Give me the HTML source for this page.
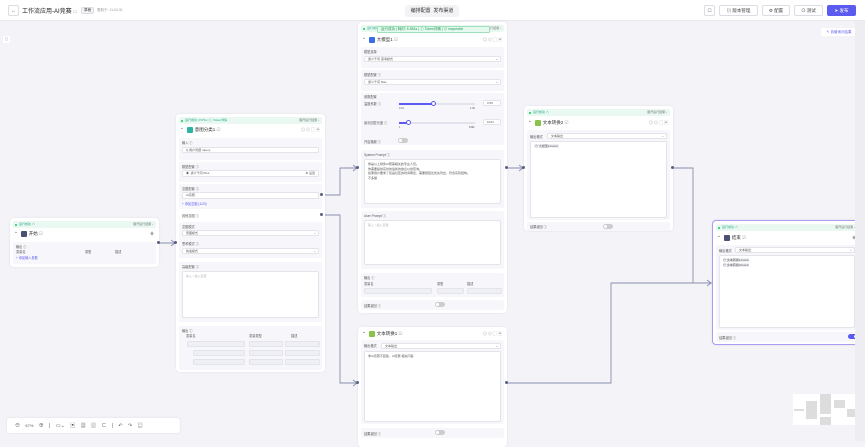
<!DOCTYPE html>
<html><head><meta charset="utf-8"><style>
*{box-sizing:border-box;margin:0;padding:0}
body{width:865px;height:441px;overflow:hidden;background:#f3f3f8;font-family:"Liberation Sans","Noto Sans CJK SC",sans-serif;color:#333;position:relative}
.a{position:absolute}
.hdr{left:0;top:0;width:865px;height:21px;background:#fff;border-bottom:1px solid #e8e8ee}
.btn{position:absolute;top:5px;height:11px;border:1px solid #dcdce4;border-radius:2px;background:#fff;font-size:4.5px;line-height:9px;text-align:center;color:#444}
.node{position:absolute;background:#fff;border-radius:4px;box-shadow:0 0 2px rgba(0,0,0,.08)}
.st{position:absolute;left:3px;right:3px;height:7px;background:#e9f8f1;border-radius:2px;font-size:3px;line-height:7px;color:#2a8;padding-left:6px}
.st:before{content:"";position:absolute;left:2px;top:2.5px;width:2px;height:2px;border-radius:1px;background:#1c5}
.st span{position:absolute;right:3px;color:#777}
.tt{position:absolute;left:4px;font-size:4.5px;line-height:7px;color:#333}
.ic{display:inline-block;width:6px;height:6px;border-radius:1px;vertical-align:middle;margin:0 2px 0 3px}
.ops{position:absolute;right:4px;font-size:4px;color:#999;letter-spacing:1px}
.sec{position:absolute;left:3px;right:3px;background:#f7f7fb;border-radius:2px}
.lb{position:absolute;left:3px;font-size:3.2px;color:#555}
.in{position:absolute;left:3px;right:3px;height:6px;background:#fff;border:1px solid #e3e3ea;border-radius:1.5px;font-size:3px;line-height:4px;padding-left:3px;color:#555}
.ta{position:absolute;left:3px;right:3px;background:#fff;border:1px solid #e3e3ea;border-radius:2px;font-size:3px;line-height:4.5px;padding:2px 3px;color:#555}
.ph{color:#bbb}
.tg{position:absolute;width:10px;height:5px;border-radius:3px;background:#ccc}
.tg:after{content:"";position:absolute;left:1px;top:1px;width:3px;height:3px;border-radius:2px;background:#fff}
.tg.on{background:#5b5bf0}.tg.on:after{left:6px}
.dot{position:absolute;width:3px;height:3px;border-radius:2px;background:#5a5f80}
.gi{position:absolute;height:6px;background:#eef0f5;border:1px solid #e3e3ea;border-radius:1.5px}
</style></head><body>
<div class="a hdr">
<div class="btn" style="left:8px;width:11px;top:5px">←</div>
<div class="a" style="left:22px;top:6px;font-size:6px;color:#222">工作流应用-AI竞赛 <span style="font-size:4px;color:#999">☐</span></div>
<div class="btn" style="left:81px;width:13px;top:7px;height:7px;font-size:3.5px;line-height:5px;background:#f3f3f6">草稿</div>
<div class="a" style="left:97px;top:8px;font-size:3.5px;color:#999">更新于: 11:04:31</div>
<div class="a" style="left:405px;top:5px;width:54px;height:12px;background:#f3f3f6;border-radius:3px;font-size:5px;line-height:12px;color:#333;text-align:center">编排配置 &nbsp;发布渠道</div>
<div class="btn" style="left:704px;width:11px">☐</div>
<div class="btn" style="left:719px;width:39px">▤ 版本管理</div>
<div class="btn" style="left:762px;width:28px">⚙ 配置</div>
<div class="btn" style="left:794px;width:29px">⊙ 测试</div>
<div class="btn" style="left:827px;width:29px;background:#5b5bf0;border-color:#5b5bf0;color:#fff">➤ 发布</div>
</div>
<div class="a" style="left:3px;top:36px;width:7px;height:7px;background:#fff;border-radius:1px;font-size:4px;text-align:center;color:#888">▯</div>
<div class="a" style="left:821px;top:28px;width:36px;height:8px;background:#fff;border-radius:2px;font-size:3.5px;line-height:8px;text-align:center;color:#5b5bf0">✎ 协管询问结果</div>

<svg class="a" style="left:0;top:0" width="865" height="441">
<g fill="none" stroke="#8a8fb0" stroke-width="0.9">
<path d="M159 243H176"/>
<path d="M322 195H340V168H358"/>
<path d="M322 215H340V383H358"/>
<path d="M507 168H524"/>
<path d="M673 168H693V283H712"/>
<path d="M507 383H611V283H712"/>
<path d="M171 240l4 3-4 3M353 165l4 3-4 3M353 380l4 3-4 3M519 165l4 3-4 3M707 280l4 3-4 3"/>
</g></svg>

<!-- start -->
<div class="node" style="left:10px;top:218px;width:149px;height:49px">
<div class="st" style="top:3px">运行成功 ∧<span>展开运行结果 ›</span></div>
<div class="tt" style="top:12px">⌃<span class="ic" style="background:#4a5070"></span>开始 <span style="color:#aaa">☑</span></div>
<div class="ops" style="top:13px">◉</div>
<div class="sec" style="top:24px;height:22px">
<div class="lb" style="top:2px">输出 ⓘ</div>
<div class="lb" style="top:7px">变量名</div><div class="lb" style="top:7px;left:72px">类型</div><div class="lb" style="top:7px;left:102px">描述</div>
<div class="lb" style="top:13px;color:#5b5bf0">+ 添加输入参数</div></div>
</div>
<div class="dot" style="left:157px;top:241px"></div>

<!-- classifier -->
<div class="node" style="left:176px;top:114px;width:149px;height:258px">
<div class="st" style="top:3px">运行成功 0.576s | ⓘ Token详情<span>展开运行结果 ›</span></div>
<div class="tt" style="top:12px">⌃<span class="ic" style="background:#2bb5a0"></span>意图分类1 <span style="color:#aaa">☑</span></div>
<div class="ops" style="top:13px">◎⊙▢▣</div>
<div class="sec" style="top:24px;height:22px"><div class="lb" style="top:2px">输入 ⓘ</div><div class="in" style="top:9px">Q 用户问题 /query</div></div>
<div class="sec" style="top:48px;height:20px"><div class="lb" style="top:2px">模型配置 ⓘ</div><div class="in" style="top:8px;height:7px">◉ &nbsp;通义千问 Plus<span style="float:right;margin-right:3px">⚙ 设置</span></div></div>
<div class="sec" style="top:70px;height:25px"><div class="lb" style="top:2px">意图配置 ⓘ</div><div class="in" style="top:8px;height:7px">AI竞赛</div><div class="lb" style="top:17px;color:#5b5bf0">+ 添加意图 (1/20)</div></div>
<div class="lb" style="top:99px;left:6px">其他意图 ⓘ</div>
<div class="sec" style="top:108px;height:36px"><div class="lb" style="top:2px">意图模式</div><div class="in" style="top:8px">意图模式 <span style="float:right;margin-right:2px">⌄</span></div><div class="lb" style="top:19px">思考模式 ⓘ</div><div class="in" style="top:26px">快速模式<span style="float:right;margin-right:2px">⌄</span></div></div>
<div class="sec" style="top:148px;height:60px"><div class="lb" style="top:2px">高级配置 ⓘ</div><div class="ta ph" style="top:9px;height:47px">输入 / 插入变量</div></div>
<div class="sec" style="top:212px;height:44px"><div class="lb" style="top:2px">输出 ⓘ</div>
<div class="lb" style="top:7px;left:7px">变量名</div><div class="lb" style="top:7px;left:70px">变量类型</div><div class="lb" style="top:7px;left:112px">描述</div>
<div class="gi" style="top:15px;left:8px;width:58px"></div><div class="gi" style="top:15px;left:70px;width:34px"></div><div class="gi" style="top:15px;left:106px;width:35px"></div>
<div class="gi" style="top:24px;left:14px;width:52px"></div><div class="gi" style="top:24px;left:70px;width:34px"></div><div class="gi" style="top:24px;left:106px;width:35px"></div>
<div class="gi" style="top:33px;left:14px;width:52px"></div><div class="gi" style="top:33px;left:70px;width:34px"></div><div class="gi" style="top:33px;left:106px;width:35px"></div></div>
</div>
<div class="dot" style="left:320px;top:193px"></div><div class="dot" style="left:320px;top:213px"></div>
<div class="dot" style="left:174px;top:241px"></div>

<!-- LLM -->
<div class="node" style="left:358px;top:22px;width:149px;height:291px">
<div class="st" style="top:3px">运行成功<span>展开运行结果 ›</span></div>
<div class="tt" style="top:14px">⌃<span class="ic" style="background:#3b6de8"></span>大模型1 <span style="color:#aaa">☑</span></div>
<div class="ops" style="top:15px">◎⊙▢▣</div>
<div class="sec" style="top:25px;height:21px"><div class="lb" style="top:2px">模型选择</div><div class="in" style="top:9px">通义千问·思考模式<span style="float:right;margin-right:2px">⌄</span></div></div>
<div class="sec" style="top:48px;height:21px"><div class="lb" style="top:2px">模型配置 ⓘ</div><div class="in" style="top:9px">通义千问 Max<span style="float:right;margin-right:2px">⌄</span></div></div>
<div class="sec" style="top:71px;height:52px"><div class="lb" style="top:1px">参数配置</div>
<div class="lb" style="top:8px">温度系数 ⓘ</div>
<div class="a" style="left:38px;top:10px;width:76px;height:1.5px;background:#e3e3ee"></div><div class="a" style="left:38px;top:10px;width:34px;height:1.5px;background:#5b5bf0"></div><div class="a" style="left:70px;top:8px;width:5px;height:5px;border-radius:3px;border:1px solid #5b5bf0;background:#fff"></div>
<div class="lb" style="top:14px;left:38px;font-size:2.5px">0.01</div><div class="lb" style="top:14px;left:109px;font-size:2.5px">1.00</div>
<div class="in" style="top:7px;left:122px;right:3px">0.65</div>
<div class="lb" style="top:27px">最长回复长度 ⓘ</div>
<div class="a" style="left:38px;top:29px;width:76px;height:1.5px;background:#e3e3ee"></div><div class="a" style="left:38px;top:29px;width:9px;height:1.5px;background:#5b5bf0"></div><div class="a" style="left:45px;top:27px;width:5px;height:5px;border-radius:3px;border:1px solid #5b5bf0;background:#fff"></div>
<div class="lb" style="top:33px;left:38px;font-size:2.5px">1</div><div class="lb" style="top:33px;left:108px;font-size:2.5px">8192</div>
<div class="in" style="top:26px;left:122px;right:3px">1024</div>
<div class="lb" style="top:46px">开启播报 ⓘ</div><div class="tg" style="left:37px;top:45px"></div></div>
<div class="sec" style="top:128px;height:58px"><div class="lb" style="top:2px">System Prompt ⓘ</div><div class="ta" style="top:9px;height:45px">你是以上财务AI赛事相关的专业人员。<br>你需要提供实时的最新的信息以供查询。<br>如果用户要求了您是社区的时间概念，需要把结论优先列出，符合实际结构。<br>不多做</div></div>
<div class="sec" style="top:189px;height:58px"><div class="lb" style="top:2px">User Prompt ⓘ</div><div class="ta ph" style="top:9px;height:45px">输入 / 插入变量</div></div>
<div class="sec" style="top:251px;height:24px"><div class="lb" style="top:2px">输出 ⓘ</div>
<div class="lb" style="top:8px">变量名</div><div class="lb" style="top:8px;left:76px">类型</div><div class="lb" style="top:8px;left:106px">描述</div>
<div class="gi" style="top:15px;left:3px;width:68px"></div><div class="gi" style="top:15px;left:76px;width:27px"></div><div class="gi" style="top:15px;left:106px;width:35px"></div></div>
<div class="sec" style="top:278px;height:10px"><div class="lb" style="top:3px">结果返回 ⓘ</div><div class="tg" style="left:74px;top:2px"></div></div>
</div>
<div class="a" style="left:377px;top:26px;width:113px;height:7px;background:#e6f9ee;border:1px solid #9fe0bb;border-radius:1px;font-size:3.5px;line-height:5px;color:#1a9a55;padding-left:3px">运行成功 | 耗时: 6.581s | ⓘ Token详情 | ⊙ requestId</div>
<div class="dot" style="left:356px;top:166px"></div><div class="dot" style="left:505px;top:166px"></div>

<!-- text2 -->
<div class="node" style="left:358px;top:327px;width:149px;height:120px">
<div class="tt" style="top:3px">⌃<span class="ic" style="background:#8bc34a"></span>文本转换1 <span style="color:#aaa">☑</span></div>
<div class="ops" style="top:4px">◎⊙▢▣</div>
<div class="sec" style="top:13px;height:84px"><div class="lb" style="top:3px">输出格式</div><div class="in" style="top:3px;left:20px">文本输出<span style="float:right;margin-right:2px">⌄</span></div><div class="ta" style="top:11px;height:71px">非AI竞赛不回答，AI竞赛 相关问答</div></div>
<div class="sec" style="top:101px;height:10px"><div class="lb" style="top:3px">结果返回 ⓘ</div><div class="tg" style="left:74px;top:2px"></div></div>
</div>
<div class="dot" style="left:356px;top:381px"></div><div class="dot" style="left:505px;top:381px"></div>

<!-- text1 -->
<div class="node" style="left:524px;top:106px;width:149px;height:125px">
<div class="st" style="top:3px">运行成功 ∧<span>展开运行结果 ›</span></div>
<div class="tt" style="top:13px">⌃<span class="ic" style="background:#8bc34a"></span>文本转换2 <span style="color:#aaa">☑</span></div>
<div class="ops" style="top:14px">◎⊙▢▣</div>
<div class="sec" style="top:24px;height:90px"><div class="lb" style="top:4px">输出格式</div><div class="in" style="top:3px;left:20px">文本输出<span style="float:right;margin-right:2px">⌄</span></div><div class="ta" style="top:11px;height:77px"><span style="background:#eef0f6;padding:0 1px">⊙ 大模型1/result</span></div></div>
<div class="sec" style="top:116px;height:9px"><div class="lb" style="top:2px">结果返回 ⓘ</div><div class="tg" style="left:76px;top:2px"></div></div>
</div>
<div class="dot" style="left:522px;top:166px"></div><div class="dot" style="left:671px;top:166px"></div>

<!-- end -->
<div class="node" style="left:712px;top:220px;width:150px;height:125px;border:1px solid #a89cf5">
<div class="st" style="top:3px">运行成功 ∧<span>展开运行结果 ›</span></div>
<div class="tt" style="top:13px">⌃<span class="ic" style="background:#4a5070"></span>结束 <span style="color:#aaa">☑</span></div>
<div class="ops" style="top:14px">◉</div>
<div class="sec" style="top:24px;height:85px"><div class="lb" style="top:3px">输出格式</div><div class="in" style="top:2px;left:19px">文本输出<span style="float:right;margin-right:2px">⌄</span></div><div class="ta" style="top:10px;height:73px"><span style="background:#eef0f6">⊙ 文本转换1/result</span><br><span style="background:#eef0f6">⊙ 文本转换2/result</span></div></div>
<div class="sec" style="top:111px;height:10px"><div class="lb" style="top:3px">结果返回 ⓘ</div><div class="tg on" style="left:132px;top:2px"></div></div>
</div>

<!-- toolbar -->
<div class="a" style="left:7px;top:418px;width:173px;height:15px;background:#fff;border-radius:3px;box-shadow:0 0 2px rgba(0,0,0,.1);font-size:5px;line-height:15px;color:#555;padding-left:8px;word-spacing:4px">⊖ <span style="font-size:4px">67%</span> ⊕ | ▭⌄ ▣ ▦ ▥ ⊂ | ↶ ↷ ▤</div>

<!-- minimap -->
<div class="a" style="left:793px;top:394px;width:65px;height:31px;background:#fff">
<div class="a" style="left:1px;top:15px;width:10px;height:2px;background:#ddd"></div>
<div class="a" style="left:13px;top:7px;width:11px;height:18px;background:#ddd"></div>
<div class="a" style="left:27px;top:0;width:11px;height:20px;background:#ddd"></div>
<div class="a" style="left:27px;top:23px;width:11px;height:8px;background:#ddd"></div>
<div class="a" style="left:41px;top:6px;width:11px;height:8px;background:#ddd"></div>
<div class="a" style="left:54px;top:15px;width:11px;height:8px;background:#ddd"></div>
</div>
<div class="a" style="left:855px;top:21px;width:10px;height:420px;background:#eeeef2"></div>
</body></html>
